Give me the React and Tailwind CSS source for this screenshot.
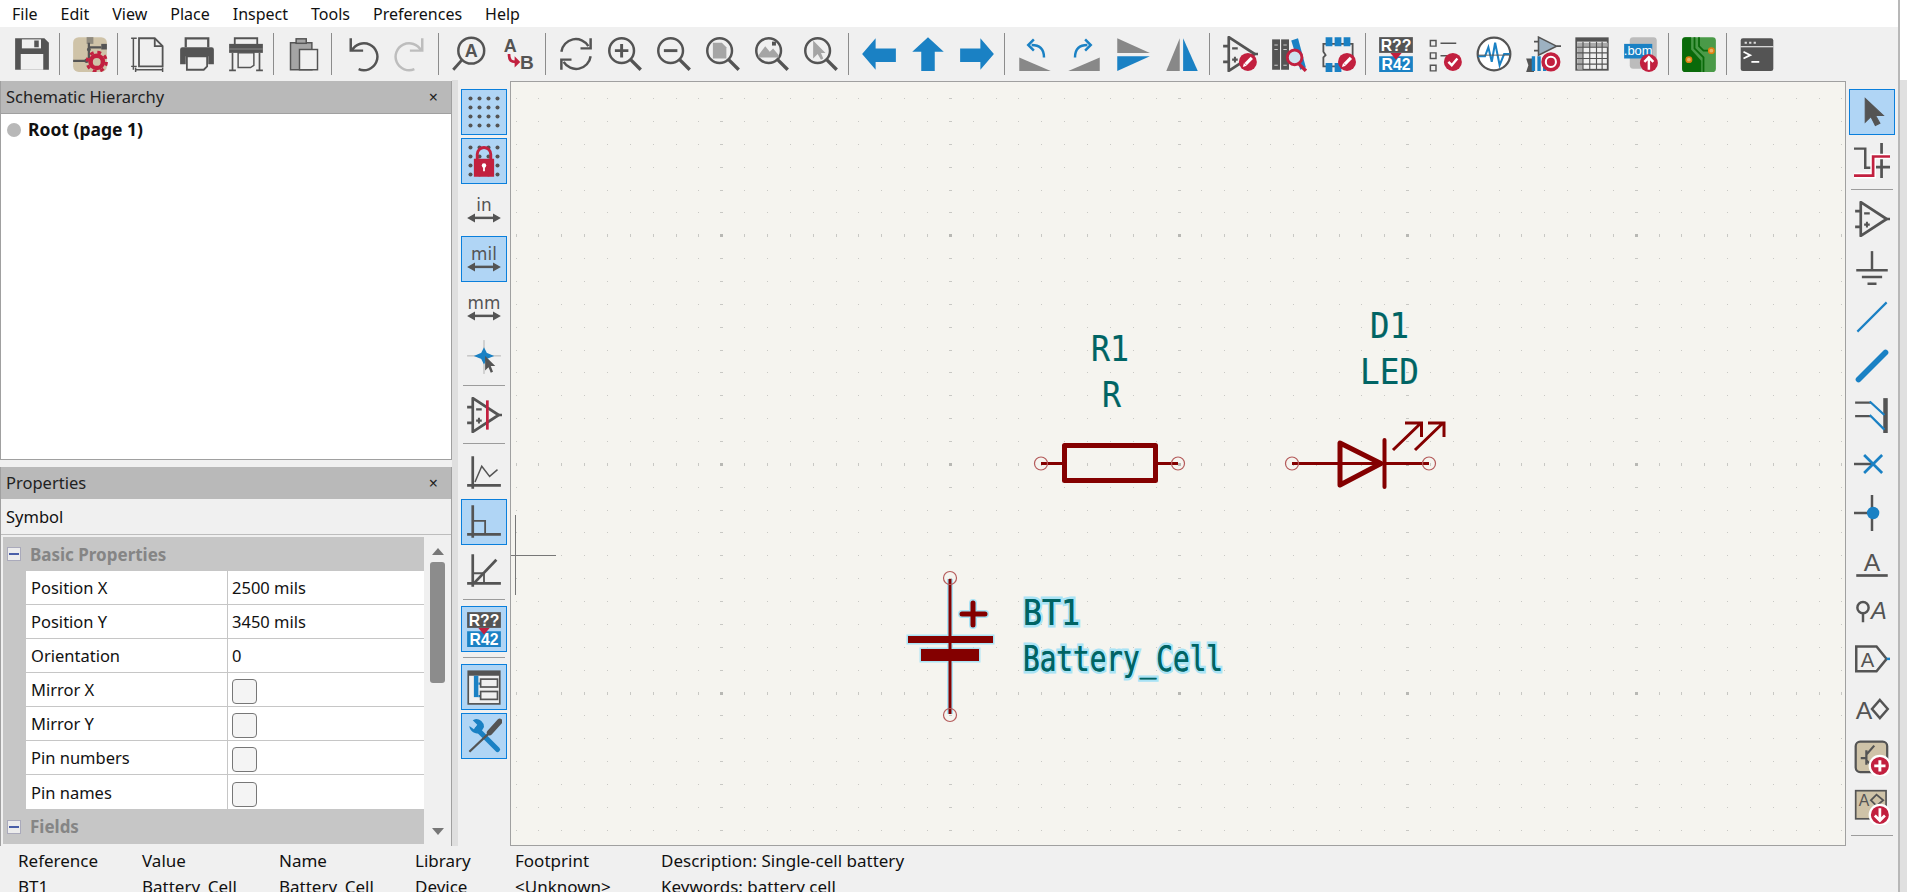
import React from "react";

const G = "#545454";
const B = "#1a81c4";
const R = "#c2203f";
const T = "#cfc3a8";
const BG = "#f0f0f0";

function Ico({ children, size = 36 }) {
  return (
    <svg width={size} height={size} viewBox="0 0 32 32" fill="none" strokeLinecap="butt" className="block shrink-0">
      {children}
    </svg>
  );
}

function Txt({ x, y, s, fill = G, w = "400", anchor = "middle", italic, family = "Liberation Sans, sans-serif", children }) {
  return (
    <text x={x} y={y} fontSize={s} fill={fill} fontWeight={w} textAnchor={anchor} fontStyle={italic ? "italic" : undefined} fontFamily={family}>
      {children}
    </text>
  );
}

function Lens({ x = 13, y = 13, children }) {
  return (
    <>
      <circle cx={x} cy={y} r="11" stroke={G} strokeWidth="2.2" />
      <path d={`M${x + 8} ${y + 8}L${x + 17} ${y + 17}`} stroke={G} strokeWidth="3" />
      {children}
    </>
  );
}

function RedDot({ cx = 24, cy = 24, r = 7.5 }) {
  return <circle cx={cx} cy={cy} r={r} fill={R} />;
}

function Pencil({ cx = 24, cy = 24 }) {
  return (
    <>
      <path d={`M${cx - 2} ${cy + 2}L${cx + 3.5} ${cy - 3.5}`} stroke="#fff" strokeWidth="2.8" />
      <path d={`M${cx - 4.5} ${cy + 4.5}L${cx - 3.5} ${cy + 1}L${cx - 1} ${cy + 3.5}Z`} fill="#fff" />
    </>
  );
}

function Opamp({ color = G }) {
  return (
    <>
      <path d="M6 1V31L29 16Z" stroke={color} strokeWidth="2.4" strokeLinejoin="round" />
      <path d="M1 9H6M1 23H6M29 16H32" stroke={color} strokeWidth="2.4" />
      <path d="M9 11H14M9 21H14M11.5 18.5V23.5" stroke={color} strokeWidth="1.8" />
    </>
  );
}

function Unit({ label }) {
  return (
    <Ico>
      <Txt x={16} y={17} s={15} family="DejaVu Sans, sans-serif">{label}</Txt>
      <path d="M4 23H28" stroke={G} strokeWidth="2.2" />
      <path d="M1 23L8 19V27ZM31 23L24 19V27Z" fill={G} />
    </Ico>
  );
}

const icons = {
  save: (
    <Ico>
      <path d="M1 2H27L31 6V30H1Z" fill={G} />
      <rect x="7" y="3" width="17" height="8" fill={BG} />
      <rect x="18" y="4" width="4" height="6" fill={G} />
      <rect x="6" y="16" width="20" height="14" fill={BG} />
    </Ico>
  ),
  fields: (
    <Ico>
      <rect x="1" y="1" width="30" height="31" rx="5" fill={T} />
      <rect x="13" y="1" width="6" height="6" fill="#8f8a7e" />
      <rect x="26" y="7" width="5" height="5" fill={G} />
      <path d="M15 6V20M1 22H13M15 10H26" stroke={G} strokeWidth="2" />
      <circle cx="15" cy="12" r="1.7" fill={G} />
      <circle cx="13" cy="22" r="2" fill={G} />
      <circle cx="22" cy="23" r="5.5" stroke={R} strokeWidth="4" />
      <circle cx="22" cy="23" r="8.6" stroke={R} strokeWidth="2.6" strokeDasharray="3.4 3.4" />
    </Ico>
  ),
  page: (
    <Ico>
      <path d="M8 2H22L29 9V27H8Z" stroke={G} strokeWidth="1.6" fill={BG} />
      <path d="M22 2V9H29" stroke={G} strokeWidth="1.6" />
      <path d="M3 2V30M1 2H6M1 27H6M5 30H29M5 28V32M29 28V32" stroke={G} strokeWidth="1.3" />
    </Ico>
  ),
  print: (
    <Ico>
      <path d="M6 10V2H26V10" stroke={G} strokeWidth="2" />
      <path d="M3 10H29Q31 10 31 12V25H26V18H6V25H1V12Q1 10 3 10Z" fill={G} />
      <path d="M7 18H25V27L22 30H7Z" fill={BG} stroke={G} strokeWidth="1.6" />
    </Ico>
  ),
  plot: (
    <Ico>
      <path d="M6 8V2H26V8" stroke={G} strokeWidth="1.6" />
      <rect x="1" y="7" width="30" height="8" fill={G} />
      <path d="M1 11.5H31" stroke="#888" strokeWidth="1" />
      <path d="M4 15V30M28 15V30M1 30.5H7M25 30.5H31" stroke={G} strokeWidth="1.5" />
      <path d="M9 15H23V26L20 28H9Z" fill={BG} stroke={G} strokeWidth="1.3" />
    </Ico>
  ),
  paste: (
    <Ico>
      <rect x="4" y="6" width="19" height="24" fill="#a5a5a5" stroke={G} strokeWidth="1.3" />
      <rect x="9" y="2.5" width="9" height="4" fill="#a5a5a5" stroke={G} strokeWidth="1.3" />
      <rect x="12" y="12" width="16" height="18" fill={BG} stroke={G} strokeWidth="1.3" />
    </Ico>
  ),
  undo: (
    <Ico>
      <path d="M6 2V13H17" stroke={G} strokeWidth="2.2" />
      <path d="M6 13A12 12 0 1 1 12 29.5" stroke={G} strokeWidth="2.2" transform="translate(1 0)" />
    </Ico>
  ),
  redo: (
    <Ico>
      <path d="M26 2V13H15" stroke="#bdbdbd" strokeWidth="2.2" />
      <path d="M26 13A12 12 0 1 0 20 29.5" stroke="#bdbdbd" strokeWidth="2.2" transform="translate(-1 0)" />
    </Ico>
  ),
  find: (
    <Ico>
      <circle cx="18" cy="13" r="11.5" stroke={G} strokeWidth="2.2" />
      <path d="M10 21L2 30" stroke={G} strokeWidth="2.6" />
      <Txt x={18} y={19} s={16} w="700">A</Txt>
    </Ico>
  ),
  replace: (
    <Ico>
      <Txt x={9} y={14} s={16} w="700">A</Txt>
      <Txt x={24} y={29} s={17} w="700">B</Txt>
      <path d="M8 16C8 22 10 23 14 23" stroke={R} strokeWidth="2.4" />
      <path d="M13 18L18 23L13 28Z" fill={R} />
    </Ico>
  ),
  refresh: (
    <Ico>
      <path d="M3 14A13 13 0 0 1 27 9" stroke={G} strokeWidth="2.2" />
      <path d="M29 2V11H20" stroke={G} strokeWidth="2.2" />
      <path d="M29 18A13 13 0 0 1 5 23" stroke={G} strokeWidth="2.2" />
      <path d="M3 30V21H12" stroke={G} strokeWidth="2.2" />
    </Ico>
  ),
  zoomIn: (
    <Ico>
      <Lens>
        <path d="M7 13H19M13 7V19" stroke={G} strokeWidth="2.6" />
      </Lens>
    </Ico>
  ),
  zoomOut: (
    <Ico>
      <Lens>
        <path d="M7 13H19" stroke={G} strokeWidth="2.6" />
      </Lens>
    </Ico>
  ),
  zoomFit: (
    <Ico>
      <Lens>
        <path d="M7 6H15L19 10V20H7Z" fill="#a5a5a5" />
      </Lens>
    </Ico>
  ),
  zoomObj: (
    <Ico>
      <Lens>
        <path d="M4 17L10 9L14 14L17 11L22 17V19H4Z" fill="#a5a5a5" />
        <rect x="16" y="5" width="3.5" height="3.5" fill={G} />
      </Lens>
    </Ico>
  ),
  zoomSel: (
    <Ico>
      <Lens>
        <path d="M9 4V20L13 16L16 21L18 20L16 15H20Z" fill="#a5a5a5" />
      </Lens>
    </Ico>
  ),
  left: (
    <Ico>
      <path d="M1 16L13 2V11H31V23H13V30Z" fill={B} />
    </Ico>
  ),
  up: (
    <Ico>
      <path d="M16 1L30 14H22V31H10V14H2Z" fill={B} />
    </Ico>
  ),
  right: (
    <Ico>
      <path d="M31 16L19 2V11H1V23H19V30Z" fill={B} />
    </Ico>
  ),
  rotL: (
    <Ico>
      <path d="M2 19L30 31H2Z" fill="#888" />
      <path d="M24 19C24 11 20 8 13 8" stroke={B} strokeWidth="2.2" />
      <path d="M15 3L10 8L15 13" stroke={B} strokeWidth="2.2" />
    </Ico>
  ),
  rotR: (
    <Ico>
      <path d="M30 19L2 31H30Z" fill="#888" />
      <path d="M8 19C8 11 12 8 19 8" stroke={B} strokeWidth="2.2" />
      <path d="M17 3L22 8L17 13" stroke={B} strokeWidth="2.2" />
    </Ico>
  ),
  mirV: (
    <Ico>
      <path d="M2 2L31 15H2Z" fill="#888" />
      <path d="M2 18H31L2 31Z" fill={B} />
    </Ico>
  ),
  mirH: (
    <Ico>
      <path d="M2 31L14 2V31Z" fill="#888" />
      <path d="M17 2V31H30Z" fill={B} />
    </Ico>
  ),
  symEdit: (
    <Ico>
      <Opamp />
      <RedDot cx={23} cy={23} r={8} />
      <Pencil cx={23} cy={23} />
    </Ico>
  ),
  symLib: (
    <Ico>
      <rect x="1" y="3" width="7" height="27" fill={G} />
      <rect x="9" y="3" width="7" height="27" fill={G} />
      <path d="M3 8H6M3 12H6M11 8H14M11 12H14M3 26H6M11 26H14" stroke="#ccc" strokeWidth="1" />
      <path d="M18 4L24 2L31 28L26 30Z" fill={B} />
      <circle cx="21" cy="19" r="6.5" fill="#cfe3ef" stroke={R} strokeWidth="2.6" />
      <path d="M25 25L31 31" stroke={R} strokeWidth="3" />
    </Ico>
  ),
  fpEdit: (
    <Ico>
      <path d="M3 7H29V27H3V19L5 17L3 14Z" stroke={G} strokeWidth="1.6" />
      <path d="M5 1H11V9H5ZM13 1H19V9H13ZM21 1H27V9H21ZM5 24H11V32H5ZM13 24H19V32H13Z" fill={B} />
      <RedDot cx={24} cy={23} r={8} />
      <Pencil cx={24} cy={23} />
    </Ico>
  ),
  annotate: (
    <Ico>
      <rect x="1" y="1" width="30" height="14" fill={G} />
      <rect x="1" y="18" width="30" height="14" fill={B} />
      <Txt x={16} y={13} s={14} fill="#fff" w="700">R??</Txt>
      <Txt x={16} y={30} s={14} fill="#fff" w="700">R42</Txt>
      <path d="M11 15H21L16 21Z" fill={R} />
    </Ico>
  ),
  erc: (
    <Ico>
      <path d="M3 4H8V9H3ZM3 15H8V20H3ZM3 26H8V31H3Z" stroke={G} strokeWidth="1.3" />
      <path d="M12 6.5H26M12 17.5H18" stroke={G} strokeWidth="1.4" />
      <RedDot cx={23} cy={23} r={8} />
      <path d="M19 23L22 26L27 20" stroke="#fff" strokeWidth="2.2" />
    </Ico>
  ),
  sim: (
    <Ico>
      <circle cx="16" cy="16" r="14.5" fill="#fff" stroke={G} strokeWidth="2" />
      <path d="M2 18H8L11 10L14 23L17 6L21 26L25 16H30" stroke={B} strokeWidth="1.8" />
      <path d="M2 17H30" stroke={G} strokeWidth="0.8" />
    </Ico>
  ),
  fpAssign: (
    <Ico>
      <path d="M12 1V17L28 9Z" fill="#9db1c1" stroke={G} strokeWidth="1.4" />
      <path d="M8 5H12M8 13H12M28 9H32" stroke={G} strokeWidth="1.4" />
      <path d="M1 20H8V32H1L3 26Z" fill={G} />
      <path d="M6 18H9V31H6ZM11 18H14V31H11ZM16 18H19V31H16Z" fill={B} />
      <RedDot cx={23} cy={23} r={8.5} />
      <circle cx="23" cy="23" r="4.5" stroke="#fff" strokeWidth="1.8" />
    </Ico>
  ),
  table: (
    <Ico>
      <rect x="2" y="2" width="28" height="28" fill={BG} stroke={G} strokeWidth="1.6" />
      <rect x="2" y="2" width="28" height="3" fill={G} />
      <rect x="3" y="6" width="27" height="4" fill="#aaa" />
      <rect x="3" y="6" width="5" height="24" fill="#aaa" />
      <path d="M2 10H30M2 15H30M2 20H30M2 25H30M8 5V30M14 5V30M20 5V30M25 5V30" stroke={G} strokeWidth="1" />
    </Ico>
  ),
  bom: (
    <Ico>
      <rect x="6" y="1" width="24" height="28" rx="3" fill="#bcbcbc" />
      <rect x="1" y="7" width="25" height="13" fill={B} />
      <Txt x={13.5} y={17} s={11.5} fill="#fff">.bom</Txt>
      <RedDot cx={23} cy={24} r={8} />
      <path d="M23 30V19M19 23L23 19L27 23" stroke="#fff" strokeWidth="2.2" />
    </Ico>
  ),
  pcb: (
    <Ico>
      <rect x="1" y="1" width="30" height="31" rx="3" fill="#4a9a48" />
      <path d="M1 4A3 3 0 0 1 4 1H9V12L18 22V32H4A3 3 0 0 1 1 29Z" fill="#0a6a0a" />
      <path d="M12 1V11L20 19V32M16 1V9L20 13H27" stroke="#0a6a0a" strokeWidth="1.6" />
      <circle cx="27" cy="13" r="2.4" fill="#eab36a" stroke="#e07f10" strokeWidth="1.4" />
      <circle cx="7" cy="21" r="2.4" fill="#eab36a" stroke="#e07f10" strokeWidth="1.4" />
    </Ico>
  ),
  console: (
    <Ico>
      <rect x="1.5" y="2" width="29" height="29" rx="2" fill={G} />
      <path d="M1.5 9.5H30.5" stroke="#fff" strokeWidth="1" />
      <path d="M5 6H7M9 6H11M13 6H15" stroke="#ddd" strokeWidth="1.8" />
      <path d="M4 14L10 17L4 20" stroke="#fff" strokeWidth="1.6" />
      <path d="M11 23H18" stroke="#fff" strokeWidth="1.6" />
    </Ico>
  ),
  grid: (
    <Ico>
      {[4, 12, 20, 28].flatMap((y) =>
        [4, 12, 20, 28].map((x) => <circle key={`${x}-${y}`} cx={x} cy={y} r="1.8" fill={G} />),
      )}
    </Ico>
  ),
  gridLock: (
    <Ico>
      {[4, 12, 20, 28].flatMap((y) =>
        [4, 12, 20, 28].map((x) => <circle key={`${x}-${y}`} cx={x} cy={y} r="1.8" fill={G} />),
      )}
      <path d="M10 15V10A6 6 0 0 1 22 10V15" stroke={R} strokeWidth="2.6" />
      <path d="M7 14H25V30H7Z" fill={R} />
      <circle cx="16" cy="20" r="2" fill="#fff" />
      <path d="M16 20V25" stroke="#fff" strokeWidth="1.6" />
    </Ico>
  ),
  unitIn: <Unit label="in" />,
  unitMil: <Unit label="mil" />,
  unitMm: <Unit label="mm" />,
  fullCursor: (
    <Ico>
      <path d="M16 1V31M1 15H31" stroke="#aaa" strokeWidth="0.8" />
      <path d="M16 9L18 13L23 15L18 17L16 21L14 17L9 15L14 13Z" fill={B} stroke={B} strokeWidth="1.5" />
      <path d="M17 15V28L20 25L22 30L24 29L22 24H26Z" fill={G} />
    </Ico>
  ),
  hideBar: (
    <Ico>
      <Opamp />
      <path d="M19 3V29" stroke={R} strokeWidth="2.4" />
    </Ico>
  ),
  graph: (
    <Ico>
      <path d="M6 1V30M1 27H31" stroke={G} strokeWidth="2.4" />
      <path d="M8 24L14 10L21 19L28 13" stroke={G} strokeWidth="1.3" />
    </Ico>
  ),
  line90: (
    <Ico>
      <path d="M6 1V30M1 27H31" stroke={G} strokeWidth="2.4" />
      <path d="M6 15H17V27" stroke={G} strokeWidth="1.6" />
    </Ico>
  ),
  line45: (
    <Ico>
      <path d="M6 1V30M1 27H31" stroke={G} strokeWidth="2.4" />
      <path d="M6 18H16V27" stroke={G} strokeWidth="1.6" />
      <path d="M7 27L27 6" stroke={G} strokeWidth="2.4" />
    </Ico>
  ),
  hierarchy: (
    <Ico>
      <rect x="2" y="2" width="28" height="29" fill={BG} stroke={G} strokeWidth="1.5" />
      <rect x="2" y="2" width="28" height="4" fill={G} />
      <rect x="7" y="6" width="4" height="19" fill={B} />
      <path d="M11 13H13M11 24H13" stroke={B} strokeWidth="2" />
      <rect x="13" y="9" width="15" height="7" stroke={G} strokeWidth="1.5" />
      <rect x="13" y="20" width="15" height="7" stroke={G} strokeWidth="1.5" />
    </Ico>
  ),
  tools: (
    <Ico>
      <path d="M10 10L28 28" stroke={B} strokeWidth="4.6" strokeLinecap="round" />
      <path d="M3 7A7 7 0 0 0 13 13L16 8A7 7 0 0 0 8 1L6 2L10 6L7 10Z" fill={B} />
      <path d="M30 3L21 13" stroke={G} strokeWidth="5" strokeLinecap="round" />
      <path d="M21 13L3 30" stroke={G} strokeWidth="2" />
    </Ico>
  ),
  arrow: (
    <Ico>
      <path d="M10 4V25L15 20L19 28L23 26L19 19H26Z" fill={G} stroke={G} strokeWidth="1" />
    </Ico>
  ),
  route: (
    <Ico>
      <path d="M0 5H10V22H17" stroke={G} strokeWidth="2.2" />
      <path d="M24.5 0V31M19 21.5H32" stroke={G} strokeWidth="2.4" />
      <path d="M0 29H17V12H32" stroke="#fff" strokeWidth="5" />
      <path d="M0 29H17V12H32" stroke={R} strokeWidth="2.4" />
    </Ico>
  ),
  opamp: (
    <Ico>
      <Opamp />
    </Ico>
  ),
  ground: (
    <Ico>
      <path d="M16 1V17" stroke={G} strokeWidth="2.2" />
      <path d="M2 18H30M7 24H25M12 30H20" stroke={G} strokeWidth="2.4" />
    </Ico>
  ),
  wire: (
    <Ico>
      <path d="M3 29L29 3" stroke={B} strokeWidth="1.9" />
    </Ico>
  ),
  bus: (
    <Ico>
      <path d="M4 28L28 4" stroke={B} strokeWidth="5" strokeLinecap="round" />
    </Ico>
  ),
  busEntry: (
    <Ico>
      <path d="M28 1V32" stroke={G} strokeWidth="4" />
      <path d="M1 5H15M1 17H15" stroke={G} strokeWidth="2" />
      <path d="M14 4L27 16M14 16L27 29" stroke={B} strokeWidth="2" />
    </Ico>
  ),
  noConn: (
    <Ico>
      <path d="M0 16H16" stroke={G} strokeWidth="2.2" />
      <path d="M9 8L25 24M25 8L9 24" stroke={B} strokeWidth="2.4" />
    </Ico>
  ),
  junction: (
    <Ico>
      <path d="M16 0V32M0 16H16" stroke={G} strokeWidth="2.2" />
      <circle cx="17" cy="16" r="5.5" fill={B} />
    </Ico>
  ),
  label: (
    <Ico>
      <Txt x={16} y={24} s={22}>A</Txt>
      <path d="M2 28H30" stroke={G} strokeWidth="2.4" />
    </Ico>
  ),
  netLabel: (
    <Ico>
      <circle cx="8" cy="13" r="5" stroke={G} strokeWidth="2.2" />
      <path d="M8 18V26" stroke={G} strokeWidth="2.2" />
      <Txt x={22} y={23} s={21} italic>A</Txt>
    </Ico>
  ),
  globalLabel: (
    <Ico>
      <path d="M2 4H20L29 15L20 26H2Z" stroke={G} strokeWidth="2.2" />
      <path d="M29 15H32" stroke={B} strokeWidth="2.2" />
      <Txt x={12} y={22} s={18}>A</Txt>
    </Ico>
  ),
  hierLabel: (
    <Ico>
      <Txt x={9} y={25} s={22}>A</Txt>
      <path d="M23 8L30 16L23 24L16 16Z" stroke={G} strokeWidth="2.2" />
    </Ico>
  ),
  sheetAdd: (
    <Ico>
      <rect x="1.5" y="1.5" width="28" height="27" rx="4" fill={T} stroke={G} strokeWidth="2" />
      <path d="M6 16H11M11 9V22M11 13L18 5M11 18L18 25" stroke={G} strokeWidth="2" />
      <circle cx="23" cy="23" r="9" fill={R} stroke="#fff" strokeWidth="2" />
      <path d="M23 18V28M18 23H28" stroke="#fff" strokeWidth="2.6" />
    </Ico>
  ),
  sheetImport: (
    <Ico>
      <rect x="1.5" y="1.5" width="27" height="25" fill={T} stroke={G} strokeWidth="1.5" />
      <Txt x={9} y={15} s={14}>A</Txt>
      <path d="M20 5L26 10L20 15L15 10Z" stroke={G} strokeWidth="1.6" />
      <circle cx="23" cy="23" r="9" fill={R} stroke="#fff" strokeWidth="2" />
      <path d="M23 17V28M18.5 23.5L23 28L27.5 23.5" stroke="#fff" strokeWidth="2.4" />
    </Ico>
  ),
};

const TOP_TOOLS = [
  "save", "|", "fields", "|", "page", "print", "plot", "|", "paste", "|", "undo", "redo", "|", "find", "replace", "|",
  "refresh", "zoomIn", "zoomOut", "zoomFit", "zoomObj", "zoomSel", "|", "left", "up", "right", "|", "rotL", "rotR",
  "mirV", "mirH", "|", "symEdit", "symLib", "fpEdit", "|", "annotate", "erc", "sim", "fpAssign", "table", "bom", "|",
  "pcb", "|", "console",
];

const LEFT_TOOLS = [
  ["grid", 1], ["gridLock", 1], ["unitIn"], ["unitMil", 1], ["unitMm"], ["fullCursor"], "|", ["hideBar"], "|",
  ["graph"], ["line90", 1], ["line45"], "|", ["annotate", 1], "|", ["hierarchy", 1], ["tools", 1],
];

const RIGHT_TOOLS = [
  ["arrow", 1], ["route"], "|", ["opamp"], ["ground"], ["wire"], ["bus"], ["busEntry"], ["noConn"], ["junction"],
  ["label"], ["netLabel"], ["globalLabel"], ["hierLabel"], ["sheetAdd"], ["sheetImport"], "|",
];

const MENU = ["File", "Edit", "View", "Place", "Inspect", "Tools", "Preferences", "Help"];

const ROWS = [
  ["Position X", "2500 mils"],
  ["Position Y", "3450 mils"],
  ["Orientation", "0"],
  ["Mirror X", null],
  ["Mirror Y", null],
  ["Pin numbers", null],
  ["Pin names", null],
];

const STATUS = [
  ["w-[124px]", "Reference", "BT1"],
  ["w-[137px]", "Value", "Battery_Cell"],
  ["w-[136px]", "Name", "Battery_Cell"],
  ["w-[100px]", "Library", "Device"],
  ["w-[146px]", "Footprint", "<Unknown>"],
  ["", "Description: Single-cell battery", "Keywords: battery cell"],
];

function SideBar({ tools }) {
  return (
    <div className="flex w-[52px] shrink-0 flex-col bg-[#f0f0f0] pl-[3px] pt-[9px]">
      {tools.map((tool, i) =>
        tool === "|" ? (
          <div key={i} className="h-[9px] w-[46px] pt-[2px]">
            <div className="mx-[2px] h-px bg-[#9c9c9c]" />
          </div>
        ) : (
          <div key={i} className="h-[49px] w-[46px] shrink-0">
            <div
              className={
                tool[1]
                  ? "flex h-[46px] w-[46px] items-center justify-center border border-[#0a7fdc] bg-[#b0d5f5]"
                  : "flex h-[46px] w-[46px] items-center justify-center"
              }
            >
              {icons[tool[0]]}
            </div>
          </div>
        ),
      )}
    </div>
  );
}

function PanelTitle({ title }) {
  return (
    <div className="flex h-[32px] shrink-0 items-center justify-between bg-[#b9b9b9] pl-[5px] pr-[13px] text-[16.5px] text-[#222]">
      <span>{title}</span>
      <span className="text-[16px] leading-none">×</span>
    </div>
  );
}

function GroupHeader({ title, className }) {
  return (
    <div className={`flex items-center bg-[#c6c6c6] pl-[4px] ${className}`}>
      <div className="flex h-[14px] w-[14px] items-center justify-center border border-[#aab] bg-[#ececec]">
        <div className="h-[2px] w-[10px] bg-[#4a5fa8]" />
      </div>
      <span className="ml-[9px] text-[17px] font-bold text-[#858585]">{title}</span>
    </div>
  );
}

function PropertyGrid() {
  return (
    <div className="flex h-[308px] flex-col overflow-hidden pl-[2px]">
      <GroupHeader title="Basic Properties" className="h-[34px] shrink-0" />
      <div className="flex shrink-0 bg-[#c6c6c6] pl-[23px]">
        <div className="flex-1 bg-white">
          {ROWS.map(([name, value]) => (
            <div key={name} className="flex h-[34px] border-b border-[#c6c6c6] last:border-b-0">
              <div className="flex w-[202px] items-center border-r border-[#c6c6c6] pl-[5px] pt-[2px]">{name}</div>
              <div className="flex flex-1 items-center pl-[4px] pt-[2px]">
                {value ?? <div className="mt-[2px] h-[25px] w-[25px] rounded-[4px] border border-[#777] bg-[#f4f4f4]" />}
              </div>
            </div>
          ))}
        </div>
      </div>
      <GroupHeader title="Fields" className="h-[35px] shrink-0" />
    </div>
  );
}

function Scrollbar() {
  return (
    <div className="flex w-[27px] shrink-0 flex-col items-center bg-[#f0f0f0] pt-[11px]">
      <div className="h-0 w-0 border-x-[6px] border-b-[7px] border-x-transparent border-b-[#777]" />
      <div className="mt-[7px] h-[121px] w-[15px] rounded-[3px] bg-[#8c8c8c]" />
      <div className="mt-[145px] h-0 w-0 border-x-[6px] border-t-[7px] border-x-transparent border-t-[#777]" />
    </div>
  );
}

function GridDots() {
  const step = 22.86;
  const dots = [];
  for (let i = -9; i < 50; i++) {
    for (let j = -6; j < 28; j++) {
      const x = Math.round(721.3 + i * step);
      const y = Math.round(235.3 + j * step);
      const majorX = i % 10 === 0;
      const majorY = j % 10 === 0;
      dots.push(
        <rect
          key={`${i}-${j}`}
          x={majorX ? x - 1 : x}
          y={majorY ? y - 1 : y}
          width={majorX ? 3 : 1}
          height={majorY ? 3 : 1}
          fill={majorX && majorY ? "#b8b8b4" : "#c8c8c4"}
        />,
      );
    }
  }
  return <g>{dots}</g>;
}

function Label({ x, y, width, halo, children }) {
  return (
    <text
      x={x}
      y={y}
      textLength={width}
      lengthAdjust="spacingAndGlyphs"
      fontSize="36"
      fill="#006464"
      stroke={halo ? "#a9e3f5" : "#006464"}
      strokeWidth={halo ? 5 : 0.2}
      paintOrder="stroke"
      fontFamily="DejaVu Sans Mono, monospace"
    >
      {children}
    </text>
  );
}

function Pin({ cx, cy }) {
  return <circle cx={cx} cy={cy} r="6.5" stroke="#b45a5a" strokeWidth="1.2" />;
}

function Battery({ color, grow }) {
  return (
    <g fill={color} stroke={color} strokeWidth={grow}>
      <path d="M950 579V714" strokeWidth={3 + grow} />
      <rect x="908" y="636" width="85" height="7" />
      <rect x="921" y="649" width="58" height="12" />
      <path d="M962 614H985M973 603V625" strokeWidth={5 + grow} strokeLinecap="round" />
    </g>
  );
}

function Schematic() {
  const wine = "#840000";
  return (
    <svg width="1334" height="763" viewBox="511 82 1334 763" fill="none" className="block">
      <GridDots />

      <path d="M1041 463.5H1062M1158 463.5H1178" stroke={wine} strokeWidth="3" />
      <rect x="1064.5" y="445.5" width="91" height="35" stroke={wine} strokeWidth="5" strokeLinejoin="round" />
      <Pin cx={1041} cy={463.5} />
      <Pin cx={1178} cy={463.5} />

      <path d="M1292 463.5H1429" stroke={wine} strokeWidth="3" />
      <path d="M1340 443V485L1381 463.5Z" stroke={wine} strokeWidth="5" strokeLinejoin="round" />
      <path d="M1384.5 440V487" stroke={wine} strokeWidth="4" strokeLinecap="round" />
      <path d="M1393 450L1421 423M1405 423H1421.5V437M1415 450L1443 423M1428 423H1444V437" stroke={wine} strokeWidth="3" />
      <Pin cx={1292} cy={463.5} />
      <Pin cx={1429} cy={463.5} />

      <Battery color="#a9e3f5" grow={3} />
      <Battery color={wine} grow={0} />
      <Pin cx={950} cy={578} />
      <Pin cx={950} cy={715} />

      <Label x={1091} y={361} width={38}>R1</Label>
      <Label x={1102} y={407} width={19}>R</Label>
      <Label x={1370} y={338} width={39}>D1</Label>
      <Label x={1360} y={384} width={59}>LED</Label>
      <Label x={1023} y={625} width={57} halo>BT1</Label>
      <Label x={1023} y={671} width={200} halo>Battery_Cell</Label>
      <Label x={1023} y={625} width={57}>BT1</Label>
      <Label x={1023} y={671} width={200}>Battery_Cell</Label>

      <path d="M511 555.5H556M515.5 515V595" stroke="#777" strokeWidth="1" />
    </svg>
  );
}

export default function App() {
  return (
    <div className="flex h-screen w-screen overflow-hidden bg-[#f0f0f0] font-['Noto_Sans',sans-serif] text-[16.5px] leading-none text-[#111]">
      <div className="flex w-[1898px] shrink-0 flex-col">
        <div className="flex h-[27px] shrink-0 items-center gap-[23px] bg-white pl-[12px] text-[16px]">
          {MENU.map((item) => (
            <span key={item}>{item}</span>
          ))}
        </div>

        <div className="flex h-[53px] shrink-0 items-center pl-[7px]">
          {TOP_TOOLS.map((tool, i) =>
            tool === "|" ? (
              <div key={i} className="h-[42px] w-[9px] shrink-0 pl-[3px]">
                <div className="h-full w-px bg-[#8c8c8c]" />
              </div>
            ) : (
              <div key={i} className="flex w-[49px] shrink-0 justify-center">
                {icons[tool]}
              </div>
            ),
          )}
        </div>

        <div className="flex h-[766px] shrink-0">
          <div className="flex w-[452px] shrink-0 flex-col pt-px">
            <div className="flex h-[379px] shrink-0 flex-col border-x border-[#a0a0a0]">
              <PanelTitle title="Schematic Hierarchy" />
              <div className="flex-1 border-y border-[#a0a0a0] bg-white pl-[6px] pt-[7px]">
                <div className="flex items-center gap-[7px] text-[17.5px] font-bold">
                  <div className="h-[14px] w-[14px] rounded-full bg-[#b8b8b8]" />
                  Root (page 1)
                </div>
              </div>
            </div>
            <div className="h-[7px] shrink-0 bg-[#f0f0f0]" />
            <div className="flex flex-1 flex-col border-x border-[#a0a0a0]">
              <PanelTitle title="Properties" />
              <div className="flex h-[36px] shrink-0 items-center border-b border-[#bdbdbd] pl-[5px] pt-[2px]">Symbol</div>
              <div className="flex pt-[2px]">
                <div className="flex-1">
                  <PropertyGrid />
                </div>
                <Scrollbar />
              </div>
            </div>
          </div>
          <div className="w-[6px] shrink-0 bg-[#dfdfdf]" />
          <SideBar tools={LEFT_TOOLS} />
          <div className="mt-px flex-1 border border-[#a0a0a0] bg-[#f5f4ef]">
            <Schematic />
          </div>
          <SideBar tools={RIGHT_TOOLS} />
        </div>

        <div className="flex flex-1 pl-[18px] text-[17px]">
          {STATUS.map(([width, top, bottom]) => (
            <div key={top} className={`flex shrink-0 flex-col gap-[9px] pt-[6px] ${width}`}>
              <span className="whitespace-nowrap">{top}</span>
              <span className="whitespace-nowrap">{bottom}</span>
            </div>
          ))}
        </div>
      </div>
      <div className="flex w-[9px] shrink-0 flex-col border-l-[2px] border-[#b8b8b8]">
        <div className="h-[80px] shrink-0 bg-white" />
        <div className="flex-1 bg-[#e0e0e0]" />
      </div>
    </div>
  );
}
